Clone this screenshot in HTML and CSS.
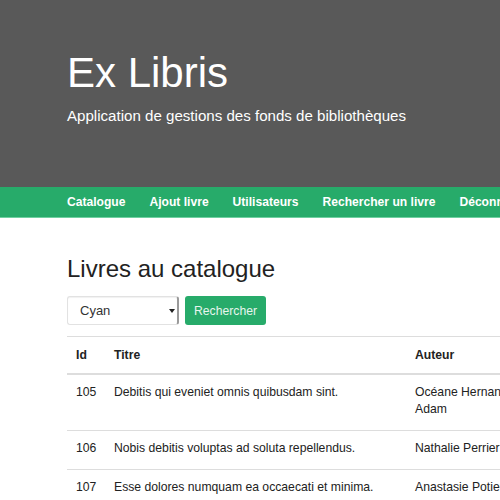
FILE: index.html
```html
<!DOCTYPE html>
<html lang="fr">
<head>
<meta charset="utf-8">
<title>Ex Libris</title>
<link rel="stylesheet" href="styles.css">
</head>
<body>
<header class="jumbotron">
  <div class="container">
    <h1 class="brand">Ex Libris</h1>
    <p class="lead">Application de gestions des fonds de bibliothèques</p>
  </div>
</header>
<nav class="navbar">
  <ul class="nav container">
    <li><a href="#">Catalogue</a></li>
    <li><a href="#">Ajout livre</a></li>
    <li><a href="#">Utilisateurs</a></li>
    <li><a href="#">Rechercher un livre</a></li>
    <li><a href="#">Déconnexion</a></li>
  </ul>
</nav>
<main class="container content">
  <h2 class="page-title">Livres au catalogue</h2>
  <form class="search">
    <span class="select-wrap">
      <select class="select">
        <option>Cyan</option>
      </select>
    </span>
    <button type="button" class="btn">Rechercher</button>
  </form>
  <table class="table">
    <colgroup>
      <col class="c-id"><col class="c-title"><col class="c-author"><col class="c-rest">
    </colgroup>
    <thead>
      <tr><th>Id</th><th>Titre</th><th>Auteur</th><th>Éditeur</th></tr>
    </thead>
    <tbody>
      <tr><td>105</td><td>Debitis qui eveniet omnis quibusdam sint.</td><td>Océane Hernandez-<br>Adam</td><td>Lorem</td></tr>
      <tr><td>106</td><td>Nobis debitis voluptas ad soluta repellendus.</td><td>Nathalie Perrier</td><td>Lorem</td></tr>
      <tr><td>107</td><td>Esse dolores numquam ea occaecati et minima.</td><td>Anastasie Potier</td><td>Lorem</td></tr>
    </tbody>
  </table>
</main>
</body>
</html>
```
FILE: styles.css
```css
html, body {
  margin: 0;
  padding: 0;
  overflow: hidden;
}
body {
  font-family: "Liberation Sans", Arial, sans-serif;
  font-size: 12.2px;
  color: #222;
  background: #fff;
}
.container {
  margin-left: 67px;
  width: 900px;
}
.jumbotron {
  background: #595959;
  color: #fff;
  height: 187px;
  box-sizing: border-box;
  padding-top: 47px;
}
.brand {
  margin: 0;
  font-size: 42px;
  font-weight: normal;
  line-height: 52px;
}
.lead {
  margin: 6px 0 0;
  font-size: 15.1px;
  line-height: 22px;
}
.navbar {
  background: #27ab6a;
  border-bottom: 1px solid #6fd0a0;
  height: 30px;
}
.nav {
  list-style: none;
  padding: 0;
  margin-top: 0;
  margin-bottom: 0;
  display: flex;
  gap: 24px;
  height: 30px;
  align-items: center;
}
.nav a {
  color: #fff;
  text-decoration: none;
  font-weight: bold;
  font-size: 12.1px;
}
.content {
  padding-top: 36px;
}
.page-title {
  margin: 0;
  font-size: 24px;
  font-weight: normal;
  line-height: 30px;
}
.search {
  display: flex;
  gap: 6px;
  margin-top: 12px;
  margin-bottom: 11px;
}
.select-wrap {
  position: relative;
  display: block;
  width: 112px;
  height: 29px;
}
.select-wrap::after {
  content: "";
  position: absolute;
  right: 4px;
  top: 13px;
  border-left: 3px solid transparent;
  border-right: 3px solid transparent;
  border-top: 4px solid #222;
}
.select {
  appearance: none;
  -webkit-appearance: none;
  width: 112px;
  height: 29px;
  box-sizing: border-box;
  border: 1px solid #e2e2e2;
  border-right: 2px solid #9a9a9a;
  border-radius: 3px;
  box-shadow: inset 0 1px 1px rgba(0,0,0,0.06);
  background: #fff;
  font-family: inherit;
  font-size: 13px;
  padding-left: 12px;
  color: #333;
  display: block;
}
.btn {
  height: 29px;
  width: 81px;
  background: #27ab6a;
  border: none;
  border-radius: 3px;
  color: #e8f5ee;
  font-family: inherit;
  font-size: 12.2px;
  padding: 0;
}
.table {
  border-collapse: collapse;
  table-layout: fixed;
  width: 900px;
  border-top: 1px solid #ddd;
}
.c-id { width: 38px; }
.c-title { width: 301px; }
.c-author { width: 200px; }
.table th, .table td {
  text-align: left;
  vertical-align: top;
  padding: 10px 9px 9px;
  line-height: 17px;
}
.table th {
  font-weight: bold;
  border-bottom: 2px solid #ddd;
}
.table td {
  padding-top: 9px;
  padding-bottom: 12px;
  border-bottom: 1px solid #ddd;
}
```
